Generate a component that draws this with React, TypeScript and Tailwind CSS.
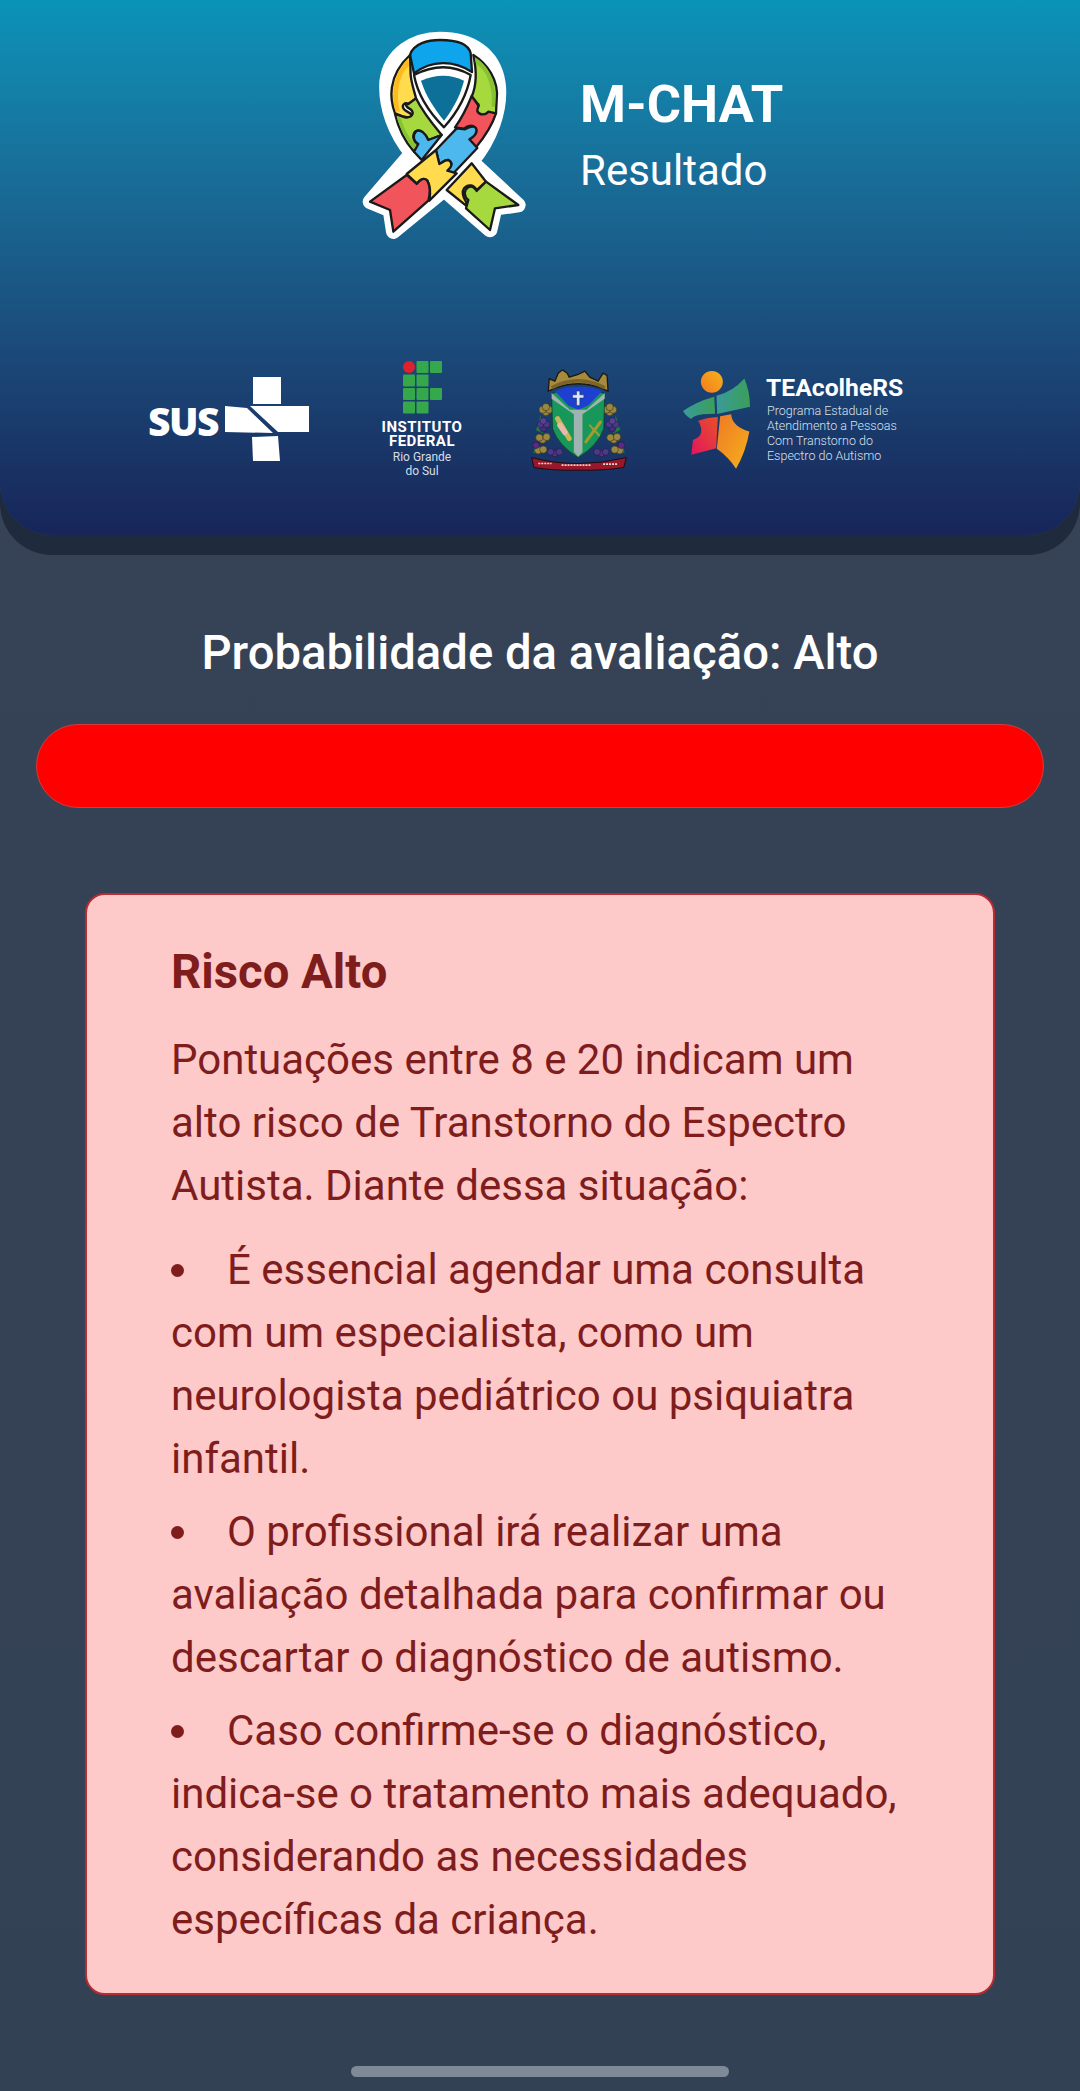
import React from "react";

function Ribbon() {
  const outline = "M300,87 C225,87 150,130 140,215 C135,290 165,370 215,430 L90,575 L150,600 L160,665 L312,540 L450,660 L465,595 L535,585 L395,455 C450,390 485,300 475,220 C462,130 390,87 300,87 Z";
  return (
    <svg viewBox="0 0 660 720" className="w-[220px] h-[240px] shrink-0">
      <path d={outline} fill="#fff" stroke="#fff" strokeWidth="44" strokeLinejoin="round" />
      <g stroke="#1a1a1a" strokeWidth="7" strokeLinejoin="round">
        <path d="M400,135 C440,160 478,210 470,270 L468,310 L440,312 C432,316 414,318 410,300 C415,290 420,285 412,280 L395,260 C408,230 412,190 400,135 Z" fill="#a6d93e" />
        <path d="M395,258 L412,282 C420,288 410,296 412,304 C420,318 440,314 445,305 L468,310 C455,350 430,385 408,412 L385,385 C400,380 415,365 405,352 C395,342 380,350 372,356 L345,352 C365,325 382,290 395,258 Z" fill="#f2545b" />
        <path d="M350,355 L375,358 C385,352 400,345 408,355 C415,368 400,382 388,388 L412,414 L338,492 L322,480 C335,470 340,458 325,450 C312,448 305,460 298,462 L288,420 Z" fill="#4cb8ee" />
        <path d="M395,460 L438,515 L410,540 C402,525 385,520 372,535 C362,550 372,565 378,575 L382,590 L320,540 Z" fill="#ffdb4d" />
        <path d="M438,515 L535,585 L465,595 L450,660 L378,595 L385,570 C372,560 370,540 385,532 C395,526 405,535 410,543 Z" fill="#a6d93e" />
        <path d="M210,135 C220,100 265,90 300,90 C345,90 385,100 392,130 L396,186 C340,150 275,150 222,190 Z" fill="#0ea5ec" />
        <path d="M210,135 L212,195 C215,225 225,250 228,265 L205,282 C195,275 185,285 190,295 C195,305 215,310 222,318 C215,325 190,322 165,310 C150,270 140,200 210,135 Z" fill="#ffdb4d" />
        <path d="M228,265 C250,310 280,345 305,375 L265,390 C255,370 240,355 225,365 C215,378 222,395 232,402 L222,425 C195,395 175,355 165,312 L195,322 C215,325 225,310 212,298 C195,290 195,280 205,282 Z" fill="#a6d93e" />
        <path d="M305,375 L245,450 L222,425 L235,402 C222,395 215,378 228,364 C242,355 258,372 265,390 Z" fill="#4cb8ee" />
        <path d="M288,420 L298,462 C305,460 312,450 325,450 C340,458 335,472 322,482 L350,490 L268,572 C270,560 275,535 262,512 C250,500 240,510 230,520 L200,492 Z" fill="#ffdb4d" />
        <path d="M200,495 L230,522 C240,510 250,500 262,512 C272,530 270,552 265,572 L160,665 L150,600 L90,575 Z" fill="#f2545b" />
      </g>
      <path d="M205,145 C165,185 150,240 167,304 L180,305 C165,245 180,190 207,168Z" fill="#fdb91e" />
      <path d="M404,142 C445,165 473,215 465,290 L455,290 C460,230 440,180 408,162Z" fill="#86c232" />
      <path d="M170,320 C180,355 198,392 222,418 L230,405 C205,385 190,350 182,324Z" fill="#86c232" />
      <path d="M222,195 C280,165 340,165 392,195 C380,265 345,315 312,352 C275,315 235,265 222,195 Z" fill="#fff" stroke="#1a1a1a" strokeWidth="7" strokeLinejoin="round" />
      <path d="M243,212 C290,192 330,192 372,212 C360,260 338,298 312,332 C285,298 258,260 243,212 Z" fill="#0d7098" />
    </svg>
  );
}

function SusLogo() {
  return (
    <div className="flex items-center w-[162px] h-[85px] gap-[9px]">
      <span className="font-['Open_Sans',sans-serif] font-extrabold text-white text-[39px] w-[68px] leading-none tracking-[-1.5px] mt-[1px]">SUS</span>
      <svg viewBox="0 0 84 85" className="w-[84px] h-[85px] shrink-0">
        <path d="M28 0H56V27H28Z M0 29L22 31L48 56L0 55Z M25 29H84V55H53Z M27 60L53 59L55 84H28Z" fill="#fff" />
      </svg>
    </div>
  );
}

function IfLogo() {
  const cells = [
    [0, 1, 2],
    [0, 1],
    [0, 1, 2],
    [0, 1],
  ];
  return (
    <div className="flex flex-col items-center w-[82px] text-white font-[Roboto]">
      <svg viewBox="0 0 40 54" className="w-[40px] h-[54px] ml-[2px]">
        {cells.map((row, r) =>
          row.map((c) =>
            r === 0 && c === 0 ? (
              <circle key={`${r}${c}`} cx="6" cy="6" r="6" fill="#e0202e" />
            ) : (
              <rect key={`${r}${c}`} x={c * 13.5} y={r * 13.5} width="12" height="12" rx="1" fill="#34a84a" />
            ),
          ),
        )}
      </svg>
      <div className="text-[15px] font-bold leading-[14px] mt-[5px] tracking-[0.5px]">INSTITUTO</div>
      <div className="text-[15px] font-bold leading-[14px] tracking-[0.5px]">FEDERAL</div>
      <div className="text-[12px] leading-[14px] mt-[2px] text-[#d5dde8]">Rio Grande</div>
      <div className="text-[12px] leading-[14px] text-[#d5dde8]">do Sul</div>
    </div>
  );
}

function Crest() {
  const grapes: [number, number, string][] = [
    [100, 235, "#3f2f7d"], [92, 222, "#4a3a8a"], [110, 222, "#4a3a8a"], [100, 212, "#5a3f95"],
    [308, 235, "#3f2f7d"], [298, 222, "#4a3a8a"], [318, 222, "#4a3a8a"], [308, 212, "#5a3f95"],
    [135, 310, "#5b2a82"], [122, 305, "#4a3a8a"], [148, 305, "#4a3a8a"],
    [275, 310, "#5b2a82"], [262, 305, "#4a3a8a"], [288, 305, "#4a3a8a"],
    [78, 285, "#5b2a82"], [335, 285, "#5b2a82"],
  ];
  const leaves: [number, number][] = [
    [108, 185], [98, 178], [118, 178], [108, 170],
    [300, 185], [290, 178], [310, 178], [300, 170],
    [98, 268], [88, 262], [110, 260], [85, 300], [100, 298],
    [312, 268], [302, 262], [322, 260], [330, 300], [315, 298],
  ];
  return (
    <svg viewBox="60 50 295 315" className="w-[98px] h-[105px] shrink-0">
      <path d="M115 122 L118 85 L135 92 L145 68 L158 58 L172 68 L178 80 L205 72 L225 62 L240 80 L265 92 L280 68 L292 75 L295 122 Q205 78 115 122Z" fill="#a68a3e" stroke="#1e1a0f" strokeWidth="4" />
      <path d="M125 112 Q205 70 285 112" fill="none" stroke="#7a6428" strokeWidth="10" />
      <path d="M78 240 L92 195 L100 250Z M332 240 L318 195 L310 250Z M75 285 L88 300 L70 310Z M340 285 L325 300 L345 310Z" fill="#1f7a3d" />
      {leaves.map(([x, y], i) => (
        <circle key={i} cx={x} cy={y} r="11" fill="#9a8740" stroke="#2d2812" strokeWidth="1.5" />
      ))}
      {grapes.map(([x, y, c], i) => (
        <circle key={i} cx={x} cy={y} r="10" fill={c} stroke="#1c1436" strokeWidth="1.5" />
      ))}
      <path d="M125 130 Q165 112 205 108 Q245 112 285 130 L282 235 Q265 285 205 322 Q145 285 128 235Z" fill="#17985a" stroke="#10301d" strokeWidth="2" />
      <path d="M135 122 Q205 95 278 122 L235 165 L205 178 L175 165Z" fill="#1e40d0" />
      <path d="M125 128 L180 178 H230 L285 128 L285 145 L218 192 V305 L205 320 L192 305 V192 L125 145Z" fill="#9fb3b0" />
      <path d="M200 122 H210 V133 H222 V143 H210 V165 H200 V143 H188 V133 H200Z" fill="#d8e6f5" stroke="#16245a" strokeWidth="1.5" />
      <path d="M143 205 L178 265" stroke="#c9b656" strokeWidth="15" strokeLinecap="round" />
      <path d="M150 225 L165 247" stroke="#e9b7ac" strokeWidth="16" strokeLinecap="round" />
      <path d="M228 275 L272 215" stroke="#a8992f" strokeWidth="9" strokeLinecap="round" />
      <path d="M240 225 L268 255" stroke="#a8992f" strokeWidth="6" strokeLinecap="round" />
      <path d="M65 322 Q130 340 205 340 Q280 340 350 322 L342 352 Q280 362 205 360 Q130 362 72 352Z" fill="#99172a" stroke="#1f0a0e" strokeWidth="3" />
      <path d="M85 340 H125 M155 345 H245 M280 342 H322" stroke="#e6d9c8" strokeWidth="5" strokeDasharray="6 3" />
    </svg>
  );
}

function TeaLogo() {
  return (
    <div className="flex items-center gap-[16px]">
      <svg viewBox="520 55 205 300" className="w-[68px] h-[100px] shrink-0">
        <defs>
          <linearGradient id="a" x1="0" y1="1" x2="1" y2="0">
            <stop offset="0" stopColor="#f47b20" />
            <stop offset="1" stopColor="#f6b21b" />
          </linearGradient>
          <linearGradient id="b" x1="0" y1="0" x2="1" y2="0">
            <stop offset="0" stopColor="#3a9a9a" />
            <stop offset="1" stopColor="#3a9f5a" />
          </linearGradient>
          <linearGradient id="c" x1="0" y1="1" x2="1" y2="0">
            <stop offset="0" stopColor="#e2155e" />
            <stop offset="1" stopColor="#e8502a" />
          </linearGradient>
          <linearGradient id="d" x1="0" y1="0" x2="1" y2="1">
            <stop offset="0" stopColor="#ef7a25" />
            <stop offset="1" stopColor="#f5b01d" />
          </linearGradient>
        </defs>
        <circle cx="607" cy="90" r="33" fill="url(#a)" />
        <path d="M520,178 Q560,150 614,135 L617,186 L580,188 Q552,192 545,202 Q530,195 520,178Z" fill="url(#b)" />
        <path d="M621,132 Q670,120 705,80 Q722,120 722,165 L623,187Z" fill="url(#b)" />
        <path d="M625,196 L620,290 L545,310 L550,265 Q578,255 575,232 Q572,215 565,208 Q590,198 625,196Z" fill="url(#c)" />
        <path d="M632,194 L665,188 Q668,225 720,240 Q710,300 680,352 Q655,315 622,292Z" fill="url(#d)" />
      </svg>
      <div className="text-white font-[Roboto]">
        <div className="text-[24.7px] font-bold leading-[24px] mb-[3px] -ml-[1px]">TEAcolheRS</div>
        <div className="text-[12.5px] font-light leading-[15px] text-[#d8e1ec]">Programa Estadual de</div>
        <div className="text-[12.5px] font-light leading-[15px] text-[#d8e1ec]">Atendimento a Pessoas</div>
        <div className="text-[12.5px] font-light leading-[15px] text-[#d8e1ec]">Com Transtorno do</div>
        <div className="text-[12.5px] font-light leading-[15px] text-[#d8e1ec]">Espectro do Autismo</div>
      </div>
    </div>
  );
}

export default function App() {
  return (
    <div className="relative min-h-[2091px] w-[1080px] overflow-hidden bg-gradient-to-b from-[#374356] to-[#334155] font-[Roboto]">
      <header className="h-[535px] rounded-b-[52px] bg-gradient-to-b from-[#0a93b8] to-[#172559] shadow-[0_20px_0_#1f2a3c] pt-[10px]">
        <div className="flex items-center pl-[340px] gap-[20px]">
          <Ribbon />
          <div className="text-white flex flex-col mt-[14px]">
            <span className="text-[52.5px] font-bold leading-[67px]">M-CHAT</span>
            <span className="text-[42px] leading-[66px] font-normal">Resultado</span>
          </div>
        </div>
        <div className="flex items-center pl-[148px] mt-[111px]">
          <SusLogo />
          <div className="ml-[71px]"><IfLogo /></div>
          <div className="ml-[67px]"><Crest /></div>
          <div className="ml-[55px]"><TeaLogo /></div>
        </div>
      </header>

      <main className="pt-[85px]">
        <h1 className="text-center text-white text-[47.25px] font-medium leading-[66px]">Probabilidade da avaliação: Alto</h1>
        <div className="mx-[36px] mt-[38px] h-[84px] rounded-full bg-[#ff0000] border border-[#d63a3a]"></div>
        <section className="mx-[85px] mt-[85px] rounded-[20px] border-2 border-[#b92c33] bg-[#fec9c9] pl-[84px] pr-[90px] pt-[46px] pb-[42px] text-[#7f1d1d]">
          <h2 className="text-[47.25px] font-bold leading-[63px] mb-[24px]">Risco Alto</h2>
          <p className="text-[42px] leading-[63px]">Pontuações entre 8 e 20 indicam um alto risco de Transtorno do Espectro Autista. Diante dessa situação:</p>
          <ul className="list-disc list-inside mt-[21px] flex flex-col gap-[10px] text-[42px] leading-[63px]">
            <li>É essencial agendar uma consulta com um especialista, como um neurologista pediátrico ou psiquiatra infantil.</li>
            <li>O profissional irá realizar uma avaliação detalhada para confirmar ou descartar o diagnóstico de autismo.</li>
            <li>Caso confirme-se o diagnóstico, indica-se o tratamento mais adequado, considerando as necessidades específicas da criança.</li>
          </ul>
        </section>
      </main>

      <div className="absolute left-[351px] top-[2066px] h-[11px] w-[378px] rounded-full bg-[#7f8a99]"></div>
    </div>
  );
}
